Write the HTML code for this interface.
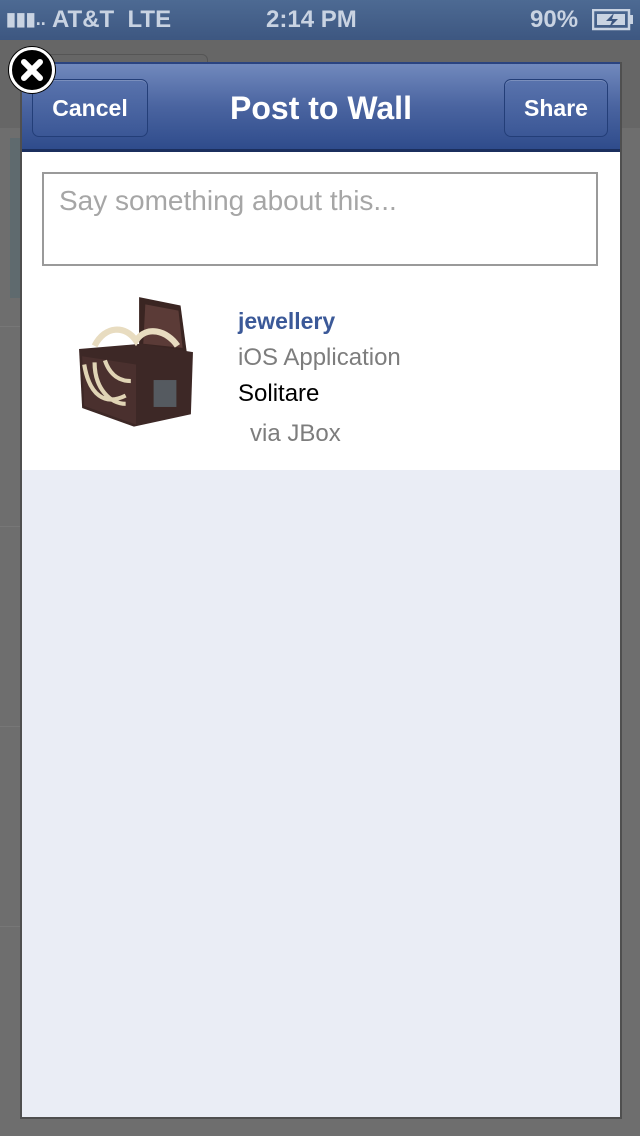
<!DOCTYPE html>
<html><head><meta charset="utf-8"><style>
*{margin:0;padding:0;box-sizing:border-box}
body{width:640px;height:1136px;background:#6e6e6e;position:relative;overflow:hidden;font-family:"Liberation Sans",sans-serif}
.status{position:absolute;left:0;top:0;width:640px;height:40px;background:linear-gradient(#4d6a93,#3d5781);color:#c9d3e2;font-weight:bold;font-size:24px}
.status span{position:absolute;top:6px}
.bgstrip{position:absolute;left:0;top:40px;width:640px;height:88px;background:#666;}
.modal{position:absolute;left:20px;top:62px;width:602px;height:1057px;border:2px solid #4f4f4f;border-top:none;background:#eaedf5}
.hdr{position:absolute;left:0;top:0;width:598px;height:90px;background:linear-gradient(#7189bd,#4a64a0 50%,#2f4c8c);border-bottom:3px solid #1b2f5e;border-top:2px solid #2b4480}
.btn{position:absolute;top:15px;height:58px;border:1px solid #233e78;border-radius:7px;background:linear-gradient(#5973ad,#3b5796);color:#fff;font-weight:bold;font-size:23px;line-height:56px;text-align:center;box-shadow:inset 0 1px 0 rgba(255,255,255,.2)}
.title{position:absolute;left:0;width:598px;top:26px;text-align:center;color:#fff;font-weight:bold;font-size:32px}
.white{position:absolute;left:0;top:90px;width:598px;height:318px;background:#fff}
.ta{position:absolute;left:20px;top:20px;width:556px;height:94px;border:2px solid #9a9a9a;color:#a6a6a6;font-size:28px;padding:11px 15px}
.t{position:absolute;left:216px;font-size:24px}
.close{position:absolute;left:9px;top:47px;width:46px;height:46px;border-radius:50%;background:#000;border:3px solid #fff;box-shadow:0 0 0 1px #000}
</style></head><body>
<div class="status"><span style="left:6px;font-size:18px;top:9px">▮▮▮..</span><span style="left:52px">AT&amp;T&nbsp;&nbsp;LTE</span><span style="left:266px">2:14 PM</span><span style="left:530px">90%</span>
<svg style="position:absolute;left:592px;top:9px" width="42" height="22"><rect x="1" y="1" width="36" height="19" fill="none" stroke="#c9d3e2" stroke-width="2.5"/><rect x="37" y="6" width="4" height="9" fill="#c9d3e2"/><path d="M5 5h28v11H5z" fill="#c9d3e2"/><path d="M22 4l-8 8h6l-3 7 9-9h-6z" fill="#3d5781"/></svg></div>
<div class="bgstrip"></div>
<div style="position:absolute;left:40px;top:54px;width:168px;height:30px;border:1px solid #555;border-radius:6px;background:#666"></div>
<div style="position:absolute;left:10px;top:138px;width:12px;height:160px;background:#5f6a6e"></div>
<div style="position:absolute;left:0;top:326px;width:20px;height:1px;background:#777"></div>
<div style="position:absolute;left:0;top:526px;width:20px;height:1px;background:#777"></div>
<div style="position:absolute;left:0;top:726px;width:20px;height:1px;background:#777"></div>
<div style="position:absolute;left:0;top:926px;width:20px;height:1px;background:#777"></div>
<div class="modal">
<div class="hdr">
<div class="btn" style="left:10px;width:116px">Cancel</div>
<div class="title">Post to Wall</div>
<div class="btn" style="left:482px;width:104px">Share</div>
</div>
<div class="white">
<svg style="position:absolute;left:36px;top:140px" width="156" height="145" viewBox="0 0 150 140">
<path d="M78 5l40 8 6 45-46 -5z" fill="#3a2522"/>
<path d="M84 12l32 6 4 36-38-4z" fill="#5b3b37"/>
<path d="M20 55l60-5 50 8-2 60-55 12-50-18z" fill="#3d2826"/>
<path d="M23 62l52 8 0 58-50-18z" fill="#4a302e"/>
<path d="M35 52c10-20 30-20 40-5c10-15 30-10 40 5" stroke="#e8dcc0" stroke-width="6" fill="none"/>
<path d="M25 70c5 30 20 40 40 30M35 68c0 25 15 40 30 40M45 66c5 15 15 20 25 20" stroke="#e0d4b5" stroke-width="4" fill="none"/>
<rect x="92" y="85" width="22" height="26" fill="#555a60"/>
</svg>
<div class="ta">Say something about this...</div>
<div class="t" style="top:156px;color:#3b5998;font-weight:bold;font-size:23px">jewellery</div>
<div class="t" style="top:192px;color:#7d7d7d">iOS Application</div>
<div class="t" style="top:228px;color:#000">Solitare</div>
<div class="t" style="top:268px;left:228px;color:#7d7d7d">via JBox</div>
</div>
</div>
<div class="close"><svg width="40" height="40" style="position:absolute;left:0;top:0"><path d="M12 12L28 28M28 12L12 28" stroke="#fff" stroke-width="6" stroke-linecap="round"/></svg></div>
</body></html>
